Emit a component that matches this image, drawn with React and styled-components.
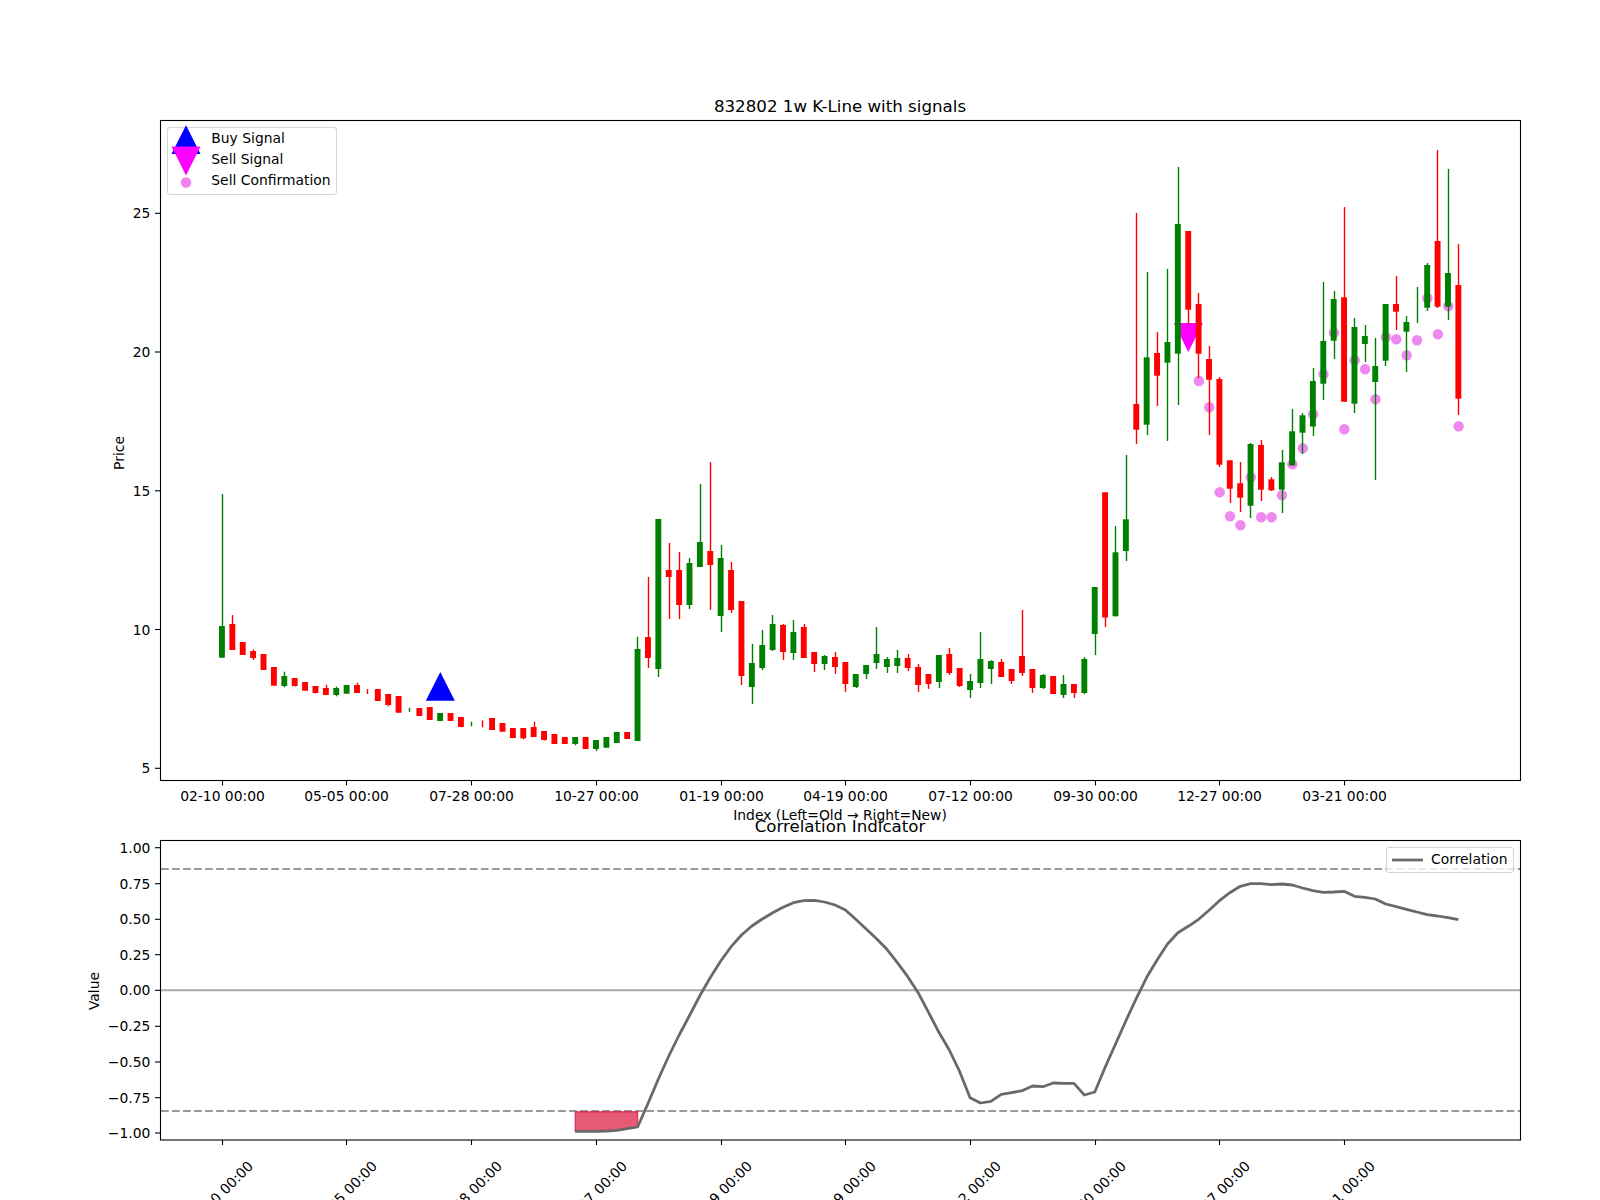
import React from "react";
import styled, { createGlobalStyle } from "styled-components";

// [colour, high, bodyTop, bodyBottom, low] in page pixels, oldest first. No body = doji line.
const CANDLES = [
  ["g",494,626,657.7,657.7],["r",615,624,650,650],["r",642,642,655,655],["r",649.3,651,658,660],
  ["r",654,654,670,670],["r",667,667,685.7,685.7],["g",671.7,676,686,687.3],["r",678,678,686,686.5],
  ["r",682,682,690.7,690.7],["r",686,686,693,693.5],["r",684.7,688,695,695],["g",686.7,688,695,696.3],
  ["g",685,685,693.7,693.7],["r",682.7,685,693,693],["r",689,null,null,694],["r",689,689,701,701],
  ["r",694,694,705,706.3],["r",696,696,712.7,712.7],["g",707.7,null,null,712],["r",708,708,716,716],
  ["r",707,707,720,720],["g",713,713,721,721],["r",713,713,721,721],["r",717,717,727,727.3],
  ["g",721.7,null,null,726.3],["r",720.3,null,null,727.3],["r",718,718,730,730],["r",723,723,731.7,731.7],
  ["r",728,728,738,738],["r",728,728,738.3,739.3],["r",721.7,727,737,737],["r",731,731,740,740.5],
  ["r",734,734,744,744],["r",737,737,744,744],["g",737,737,744,745.3],["r",737,737,749,749],
  ["g",740,740,749,751],["g",737,737,747.7,747.7],["g",732,732,743,743],["r",732,732,739,739],
  ["g",636.7,649,741,741],["r",577,637,658,668],["g",519,519,669,677],["r",543,570,577,619],
  ["r",552,570,605,619],["g",558,563,605,609],["g",484,542,567,567],["r",462,551,565,610],
  ["g",545,558,616,632],["r",562,570,610,613],["r",601,601,676,685],["g",644,663,687,704],
  ["g",630,645,668,670],["g",615,624,650,651],["r",624,625,652,660],["g",620,632,653,660],
  ["r",624,627,658,658],["r",652,652,664,672],["g",655,656,664,670],["r",652,657,667,674],
  ["r",662,662,684,692],["g",674,674,687,688],["g",665,665,674,679],["g",627,654,663,669],
  ["g",657,659,667,673],["g",650,658,666,673],["r",654,658,668,671],["r",664,667,685,692],
  ["r",674,674,684,689],["g",655,655,682,688],["r",648,654,673,675],["r",668,668,686,687],
  ["g",674,681,690,698],["g",632,659,683,688],["g",660.3,661,669,684],["r",659,662,677,677],
  ["r",669,669,681,684],["r",610,656,673,676],["r",669,669,688,693],["g",674,675,688,689],
  ["r",676,676,694,694],["g",675,684,695,698],["r",684,684,693,698],["g",657,659,693,694],
  ["g",587,587,634,655],["r",492.3,492.3,617.5,627],["g",526,552.3,616.3,616.3],["g",455,519.3,551,561],
  ["r",213,404,429.7,444],["g",272,357.3,424.7,435],["r",332,353,375.7,406],["g",269,342,362.7,441],
  ["g",167,224,353.7,405],["r",231,231,309.7,325],["r",293,304,353.7,378],["r",346,359,379.7,435],
  ["r",377,379,464.7,467],["r",460.3,460.3,488.7,503],["r",462,483.3,497.7,512],["g",443,444,505.7,518],
  ["r",440,445,489.7,501],["r",477,479.3,490.3,491],["g",450,462.3,489.7,513],["g",409,431.3,465.5,465.5],
  ["g",413,415.3,432.7,454],["g",368,381,426.5,436],["g",282,341,383.7,400],["g",291,299,340.7,359],
  ["r",207,297.3,401.7,402],["g",318,327,403.7,413],["g",325,336,344,362],["g",338,366,382,480],
  ["g",304,304,360.7,366],["r",276,304,311.7,330],["g",316,322,331.7,372],["g",287,null,null,323],
  ["g",263,265,307.7,311],["r",150,241,306.7,308],["g",169,273,306.7,320],["r",244,285,398.7,415],
];

// sell confirmation dots run from candle 94 to the last one
const CONFIRM_Y = [
  381,407.3,492.3,516.3,525.3,477.3,517.3,517.3,495.3,464.3,448.3,414.3,374.3,
  332.7,429.3,360.3,369.3,399.3,337.3,339.3,355.3,340.3,298.3,334.3,306.3,426.3,
];

// correlation line from candle 34 to the last one, page pixels
const CORR_Y = [
  1131.3,1131.3,1131.3,1131,1130.3,1128.7,1127,1103.5,1079,1056,1035,1015.5,995.5,977.5,961,946.7,935,926,919,
  912.7,907.3,902.7,900.7,900.3,902,905,910,919.3,929,938.7,949.3,962.7,976.7,992.7,1012.3,1032.3,1050,1071.7,
  1097.7,1103,1101.3,1094.3,1092.7,1090.7,1086,1086.7,1083,1083.3,1083.3,1095,1092,1067.3,1044,1020.7,998.3,
  977.3,960,944,932.7,926.3,919.3,910.3,900.7,892.7,886.3,883.7,883.7,884.7,884,885,888,890.7,892.3,892,891.3,
  896.3,897.3,899,904,906.7,909.3,912,914.7,916,917.7,919.7,
];

const DATE_TICKS = [
  ["02-10 00:00",222.5],["05-05 00:00",346.5],["07-28 00:00",471.5],["10-27 00:00",596.5],["01-19 00:00",721.5],
  ["04-19 00:00",845.5],["07-12 00:00",970.5],["09-30 00:00",1095.5],["12-27 00:00",1219.5],["03-21 00:00",1344.5],
];
const PRICE_TICKS = [["25",213.3],["20",352],["15",490.8],["10",629.5],["5",768.3]];
const VALUE_TICKS = [
  ["1.00",847.7],["0.75",883.7],["0.50",919.3],["0.25",954.7],["0.00",990.3],
  ["−0.25",1026.3],["−0.50",1062],["−0.75",1097.7],["−1.00",1133],
];

const candleX = (i) => 222 + 10.39 * i;

const corrPoints = CORR_Y.map((y, i) => [candleX(i + 34), y]);
const corrLine = corrPoints.map((p) => p.join(",")).join(" ");
const fillPoints = corrPoints.slice(0, 7).map(([x, y]) => `${x},${y}`).join(" ");

const GlobalStyle = createGlobalStyle`
  html, body {
    margin: 0;
    background: #fff;
  }
`;

const Figure = styled.div`
  width: 1600px;
  height: 1200px;
  overflow: hidden;
  font-family: "DejaVu Sans", sans-serif;
  color: #000;
`;

const PricePanel = styled.section`
  padding-top: 97px;
`;

const CorrelationPanel = styled.section`
  margin-top: -3px;
`;

const PlotTitle = styled.h2`
  width: 1360px;
  margin: 0 0 3px 160px;
  font-size: 16.67px;
  font-weight: 400;
  line-height: 20px;
  text-align: center;
  white-space: nowrap;
`;

const ChartFrame = styled.div`
  position: relative;
  width: 1600px;
  height: ${(p) => p.$height}px;
`;

const ChartSvg = styled.svg`
  display: block;
  overflow: visible;
`;

const AxesBox = styled.rect`
  fill: none;
  stroke: #000;
  stroke-width: 1.1px;
`;

const TickMark = styled.line`
  stroke: #000;
  stroke-width: 1.1px;
`;

const TickLabel = styled.text`
  font-size: 13.89px;
  fill: #000;
`;

const AxisTitle = styled.text`
  font-size: 13.89px;
  fill: #000;
  text-anchor: middle;
`;

const Wick = styled.line`
  stroke: ${(p) => (p.$up ? "#008000" : "#ff0000")};
  stroke-width: 1.4px;
`;

const Body = styled.rect`
  fill: ${(p) => (p.$up ? "#008000" : "#ff0000")};
`;

const ConfirmDot = styled.circle`
  fill: #ee82ee;
  fill-opacity: 0.95;
`;

const GuideLine = styled.line`
  stroke: ${(p) => (p.$solid ? "#aaa" : "#999")};
  stroke-width: 2.08px;
  stroke-dasharray: ${(p) => (p.$solid ? "none" : "7.7 3.33")};
`;

const CorrLine = styled.polyline`
  fill: none;
  stroke: #696969;
  stroke-width: 2.78px;
  stroke-linejoin: round;
`;

const OversoldFill = styled.polygon`
  fill: #dc143c;
  fill-opacity: 0.7;
  stroke: #dc143c;
  stroke-opacity: 0.7;
  stroke-width: 1.4px;
`;

const Legend = styled.div`
  position: absolute;
  box-sizing: border-box;
  display: flex;
  flex-direction: column;
  background: rgba(255, 255, 255, 0.8);
  border: 1px solid #d4d4d4;
  border-radius: 3px;
  font-size: 13.89px;
  line-height: 20.8px;
  white-space: nowrap;
`;

const SignalLegend = styled(Legend)`
  left: 167px;
  top: 7px;
  width: 169.5px;
  height: 67.5px;
  padding-left: 6.3px;
`;

const CorrLegend = styled(Legend)`
  left: 1386px;
  top: 7px;
  width: 128px;
  height: 25.5px;
  padding-left: 5px;
  line-height: 23.5px;
`;

const LegendRow = styled.div`
  display: flex;
  align-items: center;
  height: ${(p) => p.$height || 20.8}px;
`;

const MarkerSvg = styled.svg`
  display: block;
  flex: none;
  overflow: visible;
  margin-right: 13px;
`;

const LineSampleSvg = styled.svg`
  display: block;
  flex: none;
  margin-right: 8px;
`;

const PriceChart = () => (
  <ChartSvg width="1600" height="700" viewBox="0 120 1600 700">
    <polygon fill="#0000ff" points="440.3,672 454.8,700.7 425.8,700.7" />
    <polygon fill="#ff00ff" points="1173.8,323 1202.8,323 1188.3,352" />
    {CONFIRM_Y.map((y, i) => (
      <ConfirmDot key={i} cx={candleX(i + 94) + 0.2} cy={y} r="5.2" />
    ))}
    {CANDLES.map(([c, high, top, bottom, low], i) => {
      const x = candleX(i);
      const up = c === "g";
      const wickX = Math.floor(x + 0.3) + 0.5;
      return (
        <g key={i}>
          <Wick $up={up} x1={wickX} x2={wickX} y1={high} y2={low} />
          {top !== null && <Body $up={up} x={x - 3} y={top} width="5.9" height={bottom - top} />}
        </g>
      );
    })}
    <AxesBox x="160.5" y="120.5" width="1360" height="660" />
    {DATE_TICKS.map(([label, x]) => (
      <g key={label}>
        <TickMark x1={x} x2={x} y1="780.5" y2="785.5" />
        <TickLabel x={x} y="801.3" textAnchor="middle">{label}</TickLabel>
      </g>
    ))}
    {PRICE_TICKS.map(([label, y]) => (
      <g key={label}>
        <TickMark x1="155" x2="160.5" y1={y} y2={y} />
        <TickLabel x="150.3" y={y + 5} textAnchor="end">{label}</TickLabel>
      </g>
    ))}
    <AxisTitle x="840" y="820">Index (Left=Old → Right=New)</AxisTitle>
    <AxisTitle transform="translate(124 453) rotate(-90)">Price</AxisTitle>
  </ChartSvg>
);

const CorrelationChart = () => (
  <ChartSvg width="1600" height="360" viewBox="0 840 1600 360">
    <GuideLine x1="161" x2="1520" y1="869" y2="869" />
    <GuideLine x1="161" x2="1520" y1="1111" y2="1111" />
    <GuideLine $solid x1="161" x2="1520" y1="990.3" y2="990.3" />
    <OversoldFill points={`${fillPoints} 637.6,1111.7 575.3,1111.7`} />
    <CorrLine points={corrLine} />
    <AxesBox x="160.5" y="840.5" width="1360" height="299.5" />
    {DATE_TICKS.map(([label, x]) => (
      <g key={label}>
        <TickMark x1={x} x2={x} y1="1140" y2="1145" />
        <TickLabel
          x={x + 1.5}
          y="1197"
          textAnchor="middle"
          transform={`rotate(-45 ${x + 1.5} 1197)`}
        >
          {label}
        </TickLabel>
      </g>
    ))}
    {VALUE_TICKS.map(([label, y]) => (
      <g key={label}>
        <TickMark x1="155" x2="160.5" y1={y} y2={y} />
        <TickLabel x="150.3" y={y + 5} textAnchor="end">{label}</TickLabel>
      </g>
    ))}
    <AxisTitle transform="translate(99 991) rotate(-90)">Value</AxisTitle>
  </ChartSvg>
);

const App = () => (
  <Figure>
    <GlobalStyle />
    <PricePanel>
      <PlotTitle>832802 1w K-Line with signals</PlotTitle>
      <ChartFrame $height={700}>
        <PriceChart />
        <SignalLegend>
          <LegendRow>
            <MarkerSvg width="24" height="20" viewBox="-12 -10 24 20">
              <polygon fill="#0000ff" points="0,-12.7 14.5,16 -14.5,16" />
            </MarkerSvg>
            Buy Signal
          </LegendRow>
          <LegendRow>
            <MarkerSvg width="24" height="20" viewBox="-12 -10 24 20">
              <polygon fill="#ff00ff" points="-14.5,-12.5 14.5,-12.5 0,16.5" />
            </MarkerSvg>
            Sell Signal
          </LegendRow>
          <LegendRow>
            <MarkerSvg width="24" height="20" viewBox="-12 -10 24 20">
              <circle fill="#ee82ee" cx="0" cy="2.5" r="5.2" />
            </MarkerSvg>
            Sell Confirmation
          </LegendRow>
        </SignalLegend>
      </ChartFrame>
    </PricePanel>
    <CorrelationPanel>
      <PlotTitle>Correlation Indicator</PlotTitle>
      <ChartFrame $height={360}>
        <CorrelationChart />
        <CorrLegend>
          <LegendRow $height={23.5}>
            <LineSampleSvg width="31" height="4" viewBox="0 0 31 4">
              <line x1="0" x2="31" y1="2" y2="2" stroke="#696969" strokeWidth="2.78" />
            </LineSampleSvg>
            Correlation
          </LegendRow>
        </CorrLegend>
      </ChartFrame>
    </CorrelationPanel>
  </Figure>
);

export default App;
